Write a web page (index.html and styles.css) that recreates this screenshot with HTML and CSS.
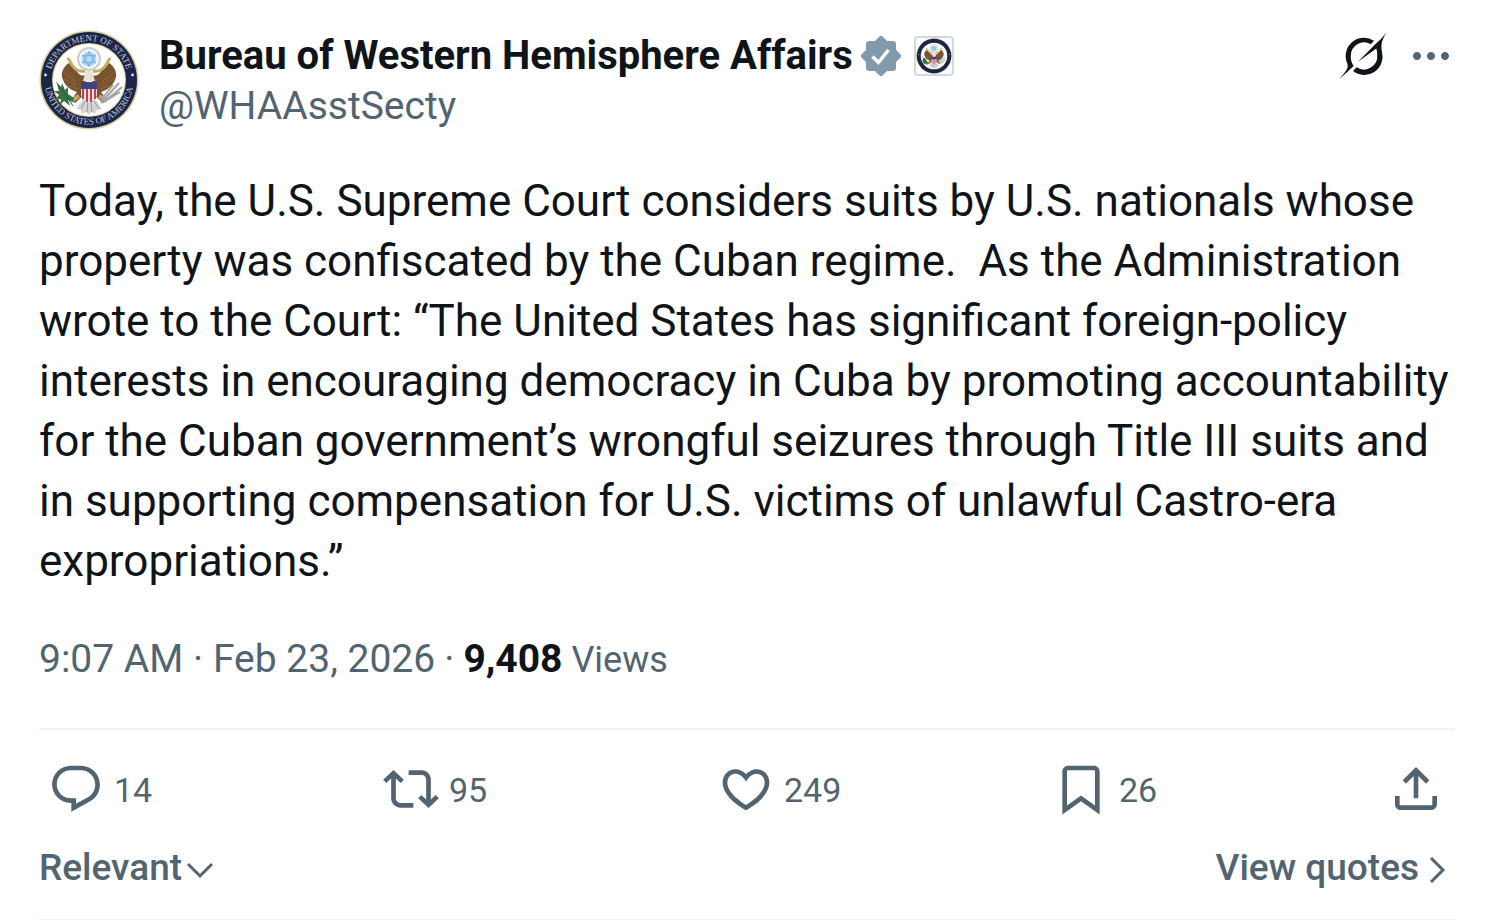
FILE: index.html
```html
<!DOCTYPE html>
<html lang="en">
<head>
   <meta charset="UTF-8">
   <meta name="viewport" content="width=device-width, initial-scale=1.0">
   <title>Bureau of Western Hemisphere Affairs</title>
   <link rel="stylesheet" href="styles.css">
</head>
<body>
   <article class="post">
      <header class="post-header">
         <svg class="avatar" viewBox="0 0 100 100" role="img" aria-label="Department of State seal">
            <defs>
               <path id="arc-top" d="M11 50a39 39 0 0 1 78 0"/>
               <path id="arc-bottom" d="M5.500 50a44.500 44.500 0 0 0 89 0"/>
               <g id="seal">
                  <circle cx="50" cy="50" r="49.500" fill="#d9cd9c"/>
                  <circle cx="50" cy="50" r="48" fill="#1b2547"/>
                  <circle cx="50" cy="50" r="37" fill="#d9cd9c"/>
                  <circle cx="50" cy="50" r="36" fill="#fff"/>
                  <circle cx="6.500" cy="45" r="1.400" fill="#e8e8e8"/>
                  <circle cx="93.500" cy="45" r="1.400" fill="#e8e8e8"/>
                  <!-- glory -->
                  <circle cx="50" cy="29" r="11" fill="#f3f4f5" stroke="#c9cdd1" stroke-width="2"/>
                  <circle cx="50" cy="29" r="7.500" fill="#b9dcf3"/>
                  <path d="M50 22l6 10.500H44zM50 36l-6-10.500h12z" fill="none" stroke="#79b5e0" stroke-width="1.300"/>
                  <!-- tail -->
                  <path d="M44 69l12 0 7 10-5 1-2 4-4-2-2 3-3-3-4 2-1-4-5-1z" fill="#d5d5d5"/>
                  <path d="M46 71l-4 8M49 71l-1 11M52 71l1 11M55 71l5 8" stroke="#999" stroke-width="1"/>
                  <!-- wings -->
                  <path d="M47 45c-5 2-8-1-11-7l-6-5c-5 3-8 9-7 14 2 8 8 13 15 15l-6 8 4 3 10-9zM53 45c5 2 8-1 11-7l6-5c5 3 8 9 7 14-2 8-8 13-15 15l6 8-4 3-10-9z" fill="#795330"/>
                  <path d="M25 43l12 8M25 49l12 6M30 56l9 3M75 43l-12 8M75 49l-12 6M70 56l-9 3" stroke="#8f6840" stroke-width="1"/>
                  <path d="M46 44c0-5 8-5 8 0l2 7H44z" fill="#e9e3d5"/>
                  <path d="M28 29c3-1 3 4 5 6 4 6 8 7 13 6M72 29c-3-1-3 4-5 6-4 6-8 7-13 6" fill="none" stroke="#c3ad5f" stroke-width="3"/>
                  <!-- claws, branch and arrows -->
                  <path d="M40 66l-8 5M60 66l8 5" stroke="#c5a562" stroke-width="4"/>
                  <path d="M17 51l5 7 1-5 3 7 3-3 0 7 6 4-1 4-5-2 2 6-6-5-4 4 1-6-6 1 4-5-5-4 5 0z" fill="#397347"/>
                  <path d="M20 55l14 21" stroke="#285a36" stroke-width="1"/>
                  <path d="M62 73l18-20M65 72l18-15M62 70l12-15M68 70l13-8" stroke="#a4a4a4" stroke-width="2"/>
                  <!-- shield -->
                  <path d="M42 54h16v11q-1 5-8 8q-7-3-8-8z" fill="#f4dddd"/>
                  <path d="M44 57v12M48 57v15M52 57v15M56 57v12" stroke="#b4465c" stroke-width="2"/>
                  <path d="M42 52h16v7H42z" fill="#3e4681"/>
               </g>
            </defs>
            <use href="#seal"/>
            <text class="seal-text"><textPath href="#arc-top" startOffset="50%">DEPARTMENT OF STATE</textPath></text>
            <text class="seal-text"><textPath href="#arc-bottom" startOffset="50%">UNITED STATES OF AMERICA</textPath></text>
         </svg>
         <div class="author">
            <div class="name-row">
               <a class="name" href="#">Bureau of Western Hemisphere Affairs</a>
               <svg class="verified" viewBox="0 0 40 40" role="img" aria-label="Verified account">
                  <g fill="#829aab">
                     <rect x="5" y="5" width="30" height="30" rx="3"/>
                     <rect x="5" y="5" width="30" height="30" rx="3" transform="rotate(45 20 20)"/>
                  </g>
                  <path d="M11.500 20.500l6 6L27.500 14" fill="none" stroke="#fff" stroke-width="3.400"/>
               </svg>
               <svg class="affiliate" viewBox="0 0 100 100" role="img" aria-label="Affiliate badge"><use href="#seal"/></svg>
            </div>
            <a class="handle" href="#">@WHAAsstSecty</a>
         </div>
         <div class="header-actions">
            <button type="button" aria-label="Explain this post">
               <svg class="explain" viewBox="0 0 48 48">
                  <path d="M35 8.700A18.300 18.300 0 0 0 8.500 32Q9.500 35 7.500 38Q4 43 0 47.500L14.700 34Q11.500 29.500 11.800 24A13.200 13.200 0 0 1 31.700 12.300z"/>
                  <path d="M19 29.700L36 12.500Q42.500 7 47.500.5Q42.500 8 42.400 14Q42.300 17 43 20A18.300 18.300 0 0 1 14 39L17.700 35.200A13.200 13.200 0 0 0 38.200 23Q38.500 20 37.300 16.500z"/>
               </svg>
            </button>
            <button type="button" aria-label="More">
               <svg viewBox="0 0 24 24"><path d="M3 12c0-1.100.9-2 2-2s2 .9 2 2-.9 2-2 2-2-.9-2-2zm9 2c1.100 0 2-.9 2-2s-.9-2-2-2-2 .9-2 2 .9 2 2 2zm7 0c1.100 0 2-.9 2-2s-.9-2-2-2-2 .9-2 2 .9 2 2 2z"/></svg>
            </button>
         </div>
      </header>

      <p class="post-text">Today, the U.S. Supreme Court considers suits by U.S. nationals whose property was confiscated by the Cuban regime.&nbsp; As the Administration wrote to the Court: “The United States has significant foreign-policy interests in encouraging democracy in Cuba by promoting accountability for the Cuban government’s wrongful seizures through Title III suits and in supporting compensation for U.S. victims of unlawful Castro-era expropriations.”</p>

      <div class="post-meta">
         <a href="#"><time datetime="2026-02-23T09:07">9:07 AM · Feb 23, 2026</time></a>
         <span>·</span>
         <span class="views"><strong>9,408</strong> Views</span>
      </div>

      <div class="actions">
         <button type="button" aria-label="Reply">
            <svg viewBox="0 0 24 24"><path d="M1.751 10c0-4.420 3.584-8 8.005-8h4.366c4.490 0 8.129 3.640 8.129 8.130 0 2.960-1.607 5.680-4.196 7.110l-8.054 4.460v-3.690h-.067c-4.490.1-8.183-3.510-8.183-8.010zm8.005-6c-3.317 0-6.005 2.690-6.005 6 0 3.370 2.770 6.080 6.138 6.010l.351-.01h1.761v2.300l5.087-2.810c1.951-1.080 3.163-3.130 3.163-5.360 0-3.390-2.744-6.130-6.129-6.130H9.756z"/></svg>
            <span>14</span>
         </button>
         <button type="button" aria-label="Repost">
            <svg viewBox="0 0 24 24"><path d="M4.500 3.880l4.432 4.140-1.364 1.460L5.500 7.550V16c0 1.100.896 2 2 2H13v2H7.500c-2.209 0-4-1.790-4-4V7.550L1.432 9.480.068 8.020 4.500 3.880zM16.500 6H11V4h5.500c2.209 0 4 1.790 4 4v8.450l2.068-1.930 1.364 1.460-4.432 4.140-4.432-4.140 1.364-1.460 2.068 1.930V8c0-1.100-.896-2-2-2z"/></svg>
            <span>95</span>
         </button>
         <button type="button" aria-label="Like">
            <svg viewBox="0 0 24 24"><path d="M16.697 5.500c-1.222-.06-2.679.51-3.890 2.160l-.805 1.090-.806-1.090C9.984 6.010 8.526 5.440 7.304 5.500c-1.243.07-2.349.78-2.910 1.910-.552 1.120-.633 2.780.479 4.820 1.074 1.970 3.257 4.270 7.129 6.610 3.870-2.340 6.052-4.640 7.126-6.610 1.111-2.040 1.030-3.700.477-4.820-.561-1.130-1.666-1.840-2.908-1.910zm4.187 7.690c-1.351 2.480-4.001 5.120-8.379 7.670l-.503.3-.504-.3c-4.379-2.550-7.029-5.190-8.382-7.670-1.360-2.500-1.410-4.860-.514-6.670.887-1.790 2.647-2.910 4.601-3.010 1.651-.09 3.368.56 4.798 2.010 1.429-1.450 3.146-2.100 4.796-2.010 1.954.1 3.714 1.220 4.601 3.010.896 1.810.846 4.170-.514 6.670z"/></svg>
            <span>249</span>
         </button>
         <button type="button" aria-label="Bookmark">
            <svg viewBox="0 0 24 24"><path d="M4 4.500C4 3.120 5.119 2 6.500 2h11C18.881 2 20 3.120 20 4.500v18.440l-8-5.710-8 5.710V4.500zM6.500 4c-.276 0-.5.22-.5.5v14.560l6-4.290 6 4.290V4.500c0-.28-.224-.5-.5-.5h-11z"/></svg>
            <span>26</span>
         </button>
         <button type="button" aria-label="Share">
            <svg viewBox="0 0 24 24"><path d="M12 2.590l5.700 5.700-1.410 1.420L13 6.410V16h-2V6.410l-3.300 3.300-1.410-1.420L12 2.590zM21 15l-.02 3.510c0 1.380-1.120 2.490-2.500 2.490H5.500C4.110 21 3 19.880 3 18.500V15h2v3.500c0 .28.22.5.5.5h12.980c.28 0 .5-.22.5-.5L19 15h2z"/></svg>
         </button>
      </div>

      <footer class="post-footer">
         <button type="button">Relevant
            <svg viewBox="0 0 36 36"><path d="M6 14l12 12 12-12"/></svg>
         </button>
         <a href="#">View quotes
            <svg viewBox="0 0 36 36"><path d="M12 8l12 12-12 12"/></svg>
         </a>
      </footer>
   </article>
</body>
</html>
```

FILE: styles.css
```css
*{
   margin: 0;
   padding: 0;
   box-sizing: border-box;
}

body{
   background-color: #fff;
   color: #0f1419;
   font-family: Roboto, "Liberation Sans", sans-serif;
}

a{
   color: inherit;
   text-decoration: none;
}

button{
   border: none;
   background: none;
   color: inherit;
   font: inherit;
   cursor: pointer;
}

svg{
   display: block;
   flex-shrink: 0;
}

.post{
   padding: 30px 40px 0 39px;
}

.post-header{
   display: flex;
   gap: 20px;
}

.avatar{
   width: 100px;
   height: 100px;
}

.seal-text{
   fill: #c6cad6;
   font-size: 9px;
   font-family: "Liberation Serif", serif;
   text-anchor: middle;
}

.author{
   flex: 1;
   padding-top: 1px;
   font-size: 39px;
   line-height: 50px;
}

.name-row{
   display: flex;
   align-items: center;
}

.name{
   font-size: 40px;
   font-weight: 700;
}

.verified{
   width: 40px;
   height: 40px;
   margin-left: 8px;
}

.affiliate{
   width: 40px;
   height: 40px;
   margin-left: 13px;
   border: 2px solid #cfd9de;
   border-radius: 4px;
}

.handle{
   color: #536471;
}

.header-actions{
   display: flex;
   align-items: flex-start;
   gap: 20px;
   padding-top: 2px;
}

.header-actions svg{
   width: 48px;
   height: 48px;
   fill: #536471;
}

.header-actions .explain{
   fill: #0f1419;
}

.post-text{
   margin-top: 40px;
   font-size: 44px;
   line-height: 60px;
}

.post-meta{
   display: flex;
   gap: 9px;
   margin-top: 43px;
   padding-bottom: 43px;
   border-bottom: 2px solid #eff3f4;
   color: #536471;
   font-size: 39px;
   line-height: 50px;
}

.views{
   font-size: 36px;
}

.views strong{
   color: #0f1419;
   font-size: 39px;
}

.actions{
   display: grid;
   grid-template-columns: repeat(4, 1fr) 56px;
   padding: 31px 11px 0 9px;
   color: #536471;
   font-size: 34px;
}

.actions button{
   display: flex;
   align-items: center;
   gap: 10px;
}

.actions svg{
   width: 56px;
   height: 56px;
   fill: #536471;
}

.actions span{
   padding-top: 2px;
}

.post-footer{
   display: flex;
   justify-content: space-between;
   padding: 26px 0;
   border-bottom: 1px solid #eff3f4;
   color: #536471;
   font-size: 37px;
   font-weight: 500;
   line-height: 50px;
}

.post-footer button, .post-footer a{
   display: flex;
   align-items: center;
}

.post-footer svg{
   width: 36px;
   height: 36px;
   fill: none;
   stroke: #536471;
   stroke-width: 3;
}
```
